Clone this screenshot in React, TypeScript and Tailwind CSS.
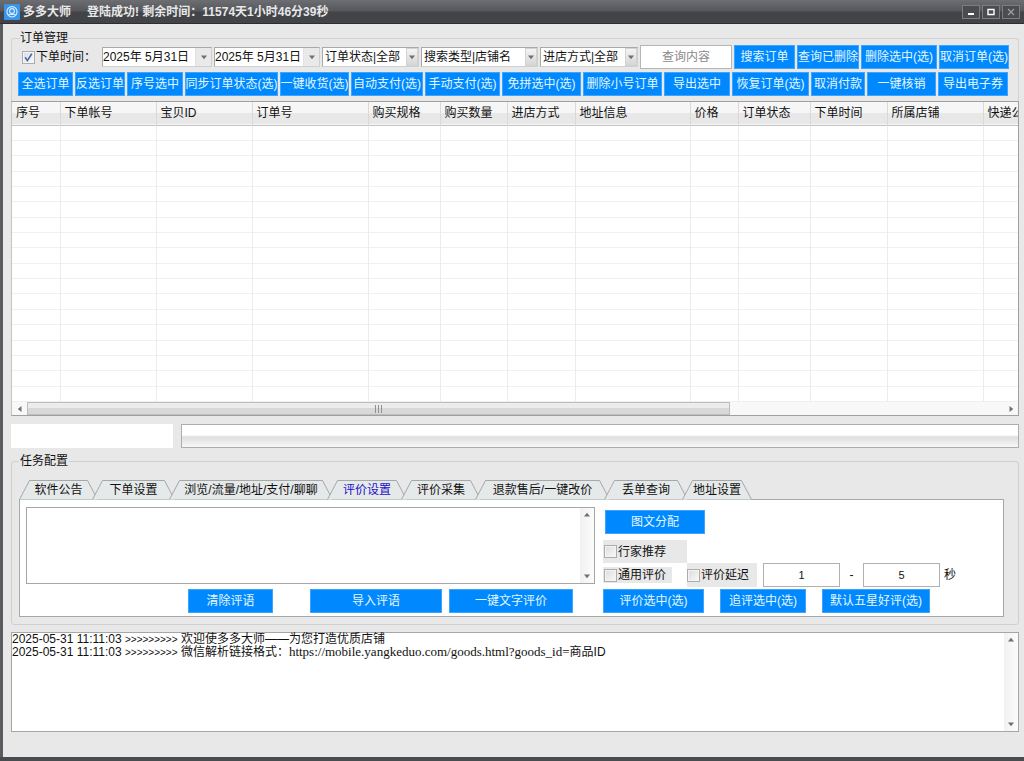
import React, { useState } from 'react';
import clsx from 'clsx';

const toolbarButtons = [
  { label: '全选订单', width: 'w-[55px]' },
  { label: '反选订单', width: 'w-[50px]' },
  { label: '序号选中', width: 'w-[56px]' },
  { label: '同步订单状态(选)', width: 'w-[93px]' },
  { label: '一键收货(选)', width: 'w-[69px]' },
  { label: '自动支付(选)', width: 'w-[72px]' },
  { label: '手动支付(选)', width: 'w-[75px]' },
  { label: '免拼选中(选)', width: 'w-[79px]' },
  { label: '删除小号订单', width: 'w-[79px]' },
  { label: '导出选中', width: 'w-[66px]' },
  { label: '恢复订单(选)', width: 'w-[77px]' },
  { label: '取消付款', width: 'w-[54px]' },
  { label: '一键核销', width: 'w-[69px]' },
  { label: '导出电子券', width: 'w-[70px]' },
];

const columns = [
  { label: '序号', width: 'w-[48px]' },
  { label: '下单帐号', width: 'w-[96px]' },
  { label: '宝贝ID', width: 'w-[96px]' },
  { label: '订单号', width: 'w-[116px]' },
  { label: '购买规格', width: 'w-[72px]' },
  { label: '购买数量', width: 'w-[67px]' },
  { label: '进店方式', width: 'w-[68px]' },
  { label: '地址信息', width: 'w-[115px]' },
  { label: '价格', width: 'w-[48px]' },
  { label: '订单状态', width: 'w-[72px]' },
  { label: '下单时间', width: 'w-[77px]' },
  { label: '所属店铺', width: 'w-[96px]' },
  { label: '快递公司', width: 'w-[96px]' },
];

// width is the distance to the next tab, the slanted edges overlap it
const tabs = [
  { label: '软件公告', width: 73 },
  { label: '下单设置', width: 77 },
  { label: '浏览/流量/地址/支付/聊聊', width: 158 },
  { label: '评价设置', width: 74 },
  { label: '评价采集', width: 74 },
  { label: '退款售后/一键改价', width: 129 },
  { label: '丢单查询', width: 78 },
  { label: '地址设置', width: 64 },
];

const rows = Array.from({ length: 18 }, (_, i) => i);

interface BlueButtonProps {
  label: string;
  width: string;
}

const BlueButton: React.FC<BlueButtonProps> = ({ label, width }) => (
  <button
    type="button"
    className={clsx('h-6 shrink-0 overflow-hidden whitespace-nowrap border border-[#3fa4fb] bg-[#0088ff] text-[#e4f8ff] hover:bg-[#1a95ff]', width)}
  >
    <span className="flex justify-center">{label}</span>
  </button>
);

const Arrow: React.FC<{ dir: 'up' | 'down' | 'left' | 'right' }> = ({ dir }) => {
  const paths = {
    up: 'M0 6 L4 1 L8 6 Z',
    down: 'M0 2 L8 2 L4 7 Z',
    left: 'M6 0 L1 4 L6 8 Z',
    right: 'M2 0 L7 4 L2 8 Z',
  };
  return (
    <svg width="6" height="6" viewBox="0 0 8 8" aria-hidden="true">
      <path d={paths[dir]} fill="#707070" />
    </svg>
  );
};

const DropArrow = () => (
  <span className="pointer-events-none flex w-3 items-center justify-center border border-[#d2d2d2] bg-linear-to-b from-[#f4f4f4] to-[#d6d6d6]">
    <Arrow dir="down" />
  </span>
);

const DateField: React.FC<{ label: string; value: string; width: string }> = ({ label, value, width }) => (
  <div className={clsx('flex h-5 shrink-0 border border-[#a9a9a9] border-r-[#cfcfcf] border-b-[#cfcfcf] bg-white', width)}>
    <input aria-label={label} defaultValue={value} className="min-w-0 flex-1 outline-none" />
    <button type="button" aria-label={`${label}选择`} className="flex w-4 items-center justify-center border-l border-[#e2e2e2] bg-[#e9e9e9]">
      <Arrow dir="down" />
    </button>
  </div>
);

const Combo: React.FC<{ label: string; value: string; width: string }> = ({ label, value, width }) => (
  <div className={clsx('flex h-5 shrink-0 border border-[#a9a9a9] border-r-[#cfcfcf] border-b-[#cfcfcf] bg-white', width)}>
    <select aria-label={label} className="min-w-0 flex-1 appearance-none pl-0.5 outline-none">
      <option>{value}</option>
    </select>
    <DropArrow />
  </div>
);

const CheckBox: React.FC<{ label: string; checked?: boolean; className?: string }> = ({ label, checked, className }) => (
  <label className={clsx('flex shrink-0 items-center gap-px whitespace-nowrap', className)}>
    <span className="relative flex h-[13px] w-[13px]">
      <input
        type="checkbox"
        defaultChecked={checked}
        className="peer h-[13px] w-[13px] appearance-none border border-[#adadad] bg-linear-to-br from-[#dcdcdc] to-[#fafafa] shadow-[inset_0_0_0_1px_#f4f4f4]"
      />
      <svg viewBox="0 0 13 13" className="pointer-events-none absolute inset-0 hidden peer-checked:block" aria-hidden="true">
        <path d="M3.2 6.2 L5.4 9.6 L9.8 2.8" fill="none" stroke="#4767b0" strokeWidth="1.6" />
      </svg>
    </span>
    {label}
  </label>
);

const ScrollColumn = () => (
  <div className="flex w-[14px] shrink-0 flex-col items-center justify-between bg-linear-to-r from-[#f1f1f1] to-[#fcfcfc] py-1">
    <Arrow dir="up" />
    <Arrow dir="down" />
  </div>
);

const TitleBar = () => (
  <header className="flex h-6 items-center border-b border-[#2c2e31] bg-linear-to-b from-[#6c6e72] from-0% via-[#55575c] via-48% to-[#424448] to-52% pr-1 pl-1 font-bold text-[#e8e8e8]">
    <svg width="16" height="16" viewBox="0 0 16 16" aria-hidden="true">
      <rect width="16" height="16" rx="1" fill="#3a94ea" />
      <path d="M8 2.6 C11 2.6 13 4.8 13 7.6 C13 10.6 11 13 8 13 C5 13 3 10.6 3 7.6 C3 4.8 5 2.6 8 2.6 Z" fill="none" stroke="#d9efff" strokeWidth="1.1" />
      <circle cx="8" cy="7" r="2.4" fill="none" stroke="#d9efff" strokeWidth="1.1" />
      <path d="M4.6 10.4 H11.4" stroke="#d9efff" strokeWidth="1.1" />
    </svg>
    <h1 className="ml-[3px]">多多大师</h1>
    <p className="ml-4 flex-1">登陆成功! 剩余时间：11574天1小时46分39秒</p>
    <div className="flex gap-0.5">
      <button type="button" aria-label="最小化" className="flex h-[14px] w-[18px] items-center justify-center border border-[#7c7e82] bg-[#4a4c50]">
        <svg width="10" height="8" viewBox="0 0 10 8"><path d="M2 6 H8" stroke="#fff" strokeWidth="2" /></svg>
      </button>
      <button type="button" aria-label="最大化" className="flex h-[14px] w-[18px] items-center justify-center border border-[#7c7e82] bg-[#4a4c50]">
        <svg width="10" height="8" viewBox="0 0 10 8"><path d="M2 1.5 H8 V6.5 H2 Z M2 1.5 H8" fill="none" stroke="#fff" strokeWidth="1.4" /></svg>
      </button>
      <button type="button" aria-label="关闭" className="flex h-[14px] w-[18px] items-center justify-center border border-[#7c7e82] bg-[#4a4c50]">
        <svg width="10" height="8" viewBox="0 0 10 8"><path d="M2 1 L8 7 M8 1 L2 7" stroke="#9b9da1" strokeWidth="1.3" /></svg>
      </button>
    </div>
  </header>
);

const OrderToolbar = () => (
  <fieldset className="min-w-0 rounded-t-[3px] border border-b-0 border-[#d2d2d2] pr-[9px] pb-[5px] pl-1.5">
    <legend className="ml-0.5 h-[14px] leading-[14px]">订单管理</legend>
    <div className="mb-[3px] flex h-6 items-center gap-0.5">
      <CheckBox label="下单时间：" checked className="w-[82px] pl-1" />
      <DateField label="开始日期" value="2025年 5月31日" width="w-[110px]" />
      <DateField label="结束日期" value="2025年 5月31日" width="w-[106px]" />
      <Combo label="订单状态" value="订单状态|全部" width="w-[97px]" />
      <Combo label="搜索类型" value="搜索类型|店铺名" width="w-[117px]" />
      <Combo label="进店方式" value="进店方式|全部" width="w-[98px]" />
      <input
        aria-label="查询内容"
        placeholder="查询内容"
        className="h-6 w-0 min-w-0 flex-1 border border-[#b5b5b5] bg-white text-center outline-none placeholder:text-[#8a8a8a]"
      />
      <BlueButton label="搜索订单" width="w-[61px]" />
      <BlueButton label="查询已删除" width="w-[62px]" />
      <BlueButton label="删除选中(选)" width="w-[76px]" />
      <BlueButton label="取消订单(选)" width="w-[70px]" />
    </div>
    <div className="flex gap-0.5">
      {toolbarButtons.map(b => (
        <BlueButton key={b.label} label={b.label} width={b.width} />
      ))}
    </div>
  </fieldset>
);

const OrderTable = () => (
  <div className="overflow-hidden border border-[#a0a0a0] border-l-[#c4c4c4] bg-white">
    <div className="overflow-hidden">
      <table className="h-[300px] w-[1067px] table-fixed border-collapse">
        <thead>
          <tr className="h-[23px] border-b border-[#c3c3c3] bg-linear-to-b from-[#f6f6f6] from-50% to-[#e8e8e8] to-50%">
            {columns.map(c => (
              <th key={c.label} scope="col" className={clsx('border-r border-[#d9d9d9] p-0 pl-1 text-left font-normal whitespace-nowrap', c.width)}>
                {c.label}
              </th>
            ))}
          </tr>
        </thead>
        <tbody>
          {rows.map(r => (
            <tr key={r} className="border-b border-[#f0f0f0]">
              {columns.map(c => (
                <td key={c.label} className="border-r border-[#ececec] p-0" />
              ))}
            </tr>
          ))}
        </tbody>
      </table>
    </div>
    <div className="flex h-[13px] items-center bg-[#f8f8f8]">
      <span className="flex w-[15px] justify-center"><Arrow dir="left" /></span>
      <div className="flex h-full flex-1">
        <div className="flex h-full w-[72%] items-center justify-center border border-[#bdbdbd] bg-linear-to-b from-[#ececec] from-50% to-[#d8d8d8] to-50%">
          <svg width="9" height="8" viewBox="0 0 9 8" aria-hidden="true">
            <path d="M1.5 0 V8 M4.5 0 V8 M7.5 0 V8" stroke="#8f8f8f" strokeWidth="1" />
          </svg>
        </div>
      </div>
      <span className="flex w-[15px] justify-center"><Arrow dir="right" /></span>
    </div>
  </div>
);

const ReviewSettings = () => (
  <div className="flex gap-2 border border-[#a3a8a8] bg-white pt-[7px] pr-1.5 pb-[3px] pl-1.5">
    <div className="w-[569px] shrink-0">
      <div className="flex h-[77px] border border-[#a6a6a6]">
        <textarea aria-label="评语" className="flex-1 resize-none outline-none" />
        <ScrollColumn />
      </div>
      <div className="mt-[5px] flex pl-[162px]">
        <BlueButton label="清除评语" width="w-[85px]" />
        <div className="ml-[37px] flex gap-[7px]">
          <BlueButton label="导入评语" width="w-[132px]" />
          <BlueButton label="一键文字评价" width="w-[124px]" />
        </div>
      </div>
    </div>
    <div className="min-w-0 flex-1 pt-[3px]">
      <div className="flex pl-0.5">
        <BlueButton label="图文分配" width="w-[100px]" />
      </div>
      <CheckBox label="行家推荐" className="mt-1.5 h-[23px] w-[84px] bg-[#e8e8e8] pl-px" />
      <div className="flex h-6 items-center">
        <CheckBox label="通用评价" className="h-4 w-[69px] bg-[#e8e8e8] pl-px" />
        <CheckBox label="评价延迟" className="ml-[15px] h-6 w-[70px] bg-[#e8e8e8]" />
        <input aria-label="最短延迟" defaultValue="1" className="ml-1.5 h-6 w-[77px] border border-[#b0b0b0] text-center text-[11px] outline-none" />
        <span className="w-[23px] text-center">-</span>
        <input aria-label="最长延迟" defaultValue="5" className="h-6 w-[77px] border border-[#b0b0b0] text-center text-[11px] outline-none" />
        <span className="ml-1">秒</span>
      </div>
      <div className="mt-0.5 flex gap-4">
        <BlueButton label="评价选中(选)" width="w-[101px]" />
        <BlueButton label="追评选中(选)" width="w-[86px]" />
        <BlueButton label="默认五星好评(选)" width="w-[108px]" />
      </div>
    </div>
  </div>
);

const TaskConfig = () => {
  const [active, setActive] = useState(3);

  return (
    <fieldset className="mt-1.5 min-w-0 rounded-[3px] border border-[#cfcfcf] pr-[14px] pb-[7px] pl-[7px]">
      <legend className="h-[14px] px-px leading-[14px]">任务配置</legend>
      <div role="tablist" className="mt-3 flex">
        {tabs.map((t, i) => (
          <button
            key={t.label}
            type="button"
            role="tab"
            aria-selected={i === active}
            onClick={() => setActive(i)}
            className={clsx('relative -mr-1.5 h-[19px] shrink-0 whitespace-nowrap', i === active && 'text-[#1a10c8]')}
            style={{ width: t.width + 6 }}
          >
            {/* slanted tab outline */}
            <svg width={t.width + 6} height="20" className="absolute inset-0" aria-hidden="true">
              <path
                d={`M0.5 19.5 L10.5 0.5 H${t.width - 4.5} L${t.width + 5.5} 19.5`}
                fill="#e6e9e9"
                stroke="#a3a8a8"
              />
            </svg>
            <span className="relative">{t.label}</span>
          </button>
        ))}
      </div>
      <ReviewSettings />
    </fieldset>
  );
};

const LogPanel = () => (
  <div className="mt-[7px] mb-[25px] flex min-h-[100px] flex-1 border border-[#a6a6a6] bg-white">
    <div role="log" className="flex-1 leading-3">
      <p>
        2025-05-31 11:11:03 <span className="text-[10px]">&gt;&gt;&gt;&gt;&gt;&gt;&gt;&gt;&gt;</span> 欢迎使多多大师——为您打造优质店铺
      </p>
      <p>
        2025-05-31 11:11:03 <span className="text-[10px]">&gt;&gt;&gt;&gt;&gt;&gt;&gt;&gt;&gt;</span> 微信解析链接格式：
        <span className="font-['Liberation_Serif'] text-[13px] leading-3">https://mobile.yangkeduo.com/goods.html?goods_id=</span>商品ID
      </p>
    </div>
    <ScrollColumn />
  </div>
);

export default function App() {
  return (
    <div className="flex min-h-screen flex-col border-b-4 border-[#484b50] bg-[#e8e8e8] font-['Liberation_Sans','Noto_Sans_CJK_SC',sans-serif] text-[12px] leading-4 text-[#111]">
      <TitleBar />
      <main className="flex flex-1 flex-col border-l-[3px] border-[#5a5c60] pt-[7px] pr-[5px] pl-2">
        <OrderToolbar />
        <OrderTable />
        <div className="mt-2 flex h-6 gap-2">
          <output className="w-[162px] bg-white" />
          <div
            role="progressbar"
            aria-label="任务进度"
            aria-valuenow={0}
            className="flex-1 border border-[#adadad] bg-linear-to-b from-[#ffffff] from-45% via-[#dedede] via-55% to-[#f8f8f8]"
          />
        </div>
        <TaskConfig />
        <LogPanel />
      </main>
    </div>
  );
}
